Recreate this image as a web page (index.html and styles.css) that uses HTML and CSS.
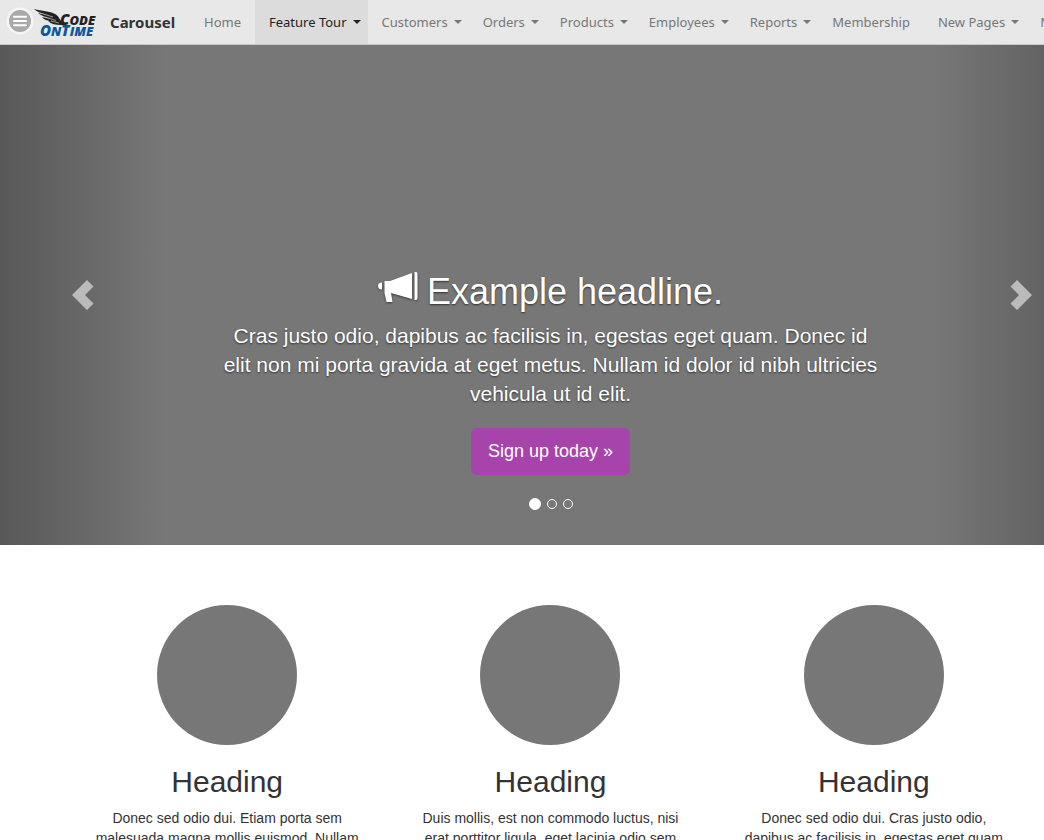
FILE: index.html
```html
<!DOCTYPE html>
<html lang="en">
<head>
<meta charset="utf-8">
<title>Carousel</title>
<link rel="stylesheet" href="styles.css">
</head>
<body>
<header class="navbar">
  <button class="menu-button" type="button" aria-label="Menu">
    <svg width="28" height="28" viewBox="0 0 28 28"><circle cx="14" cy="14" r="13.5" fill="#f5f5f5"/><circle cx="14" cy="14" r="11" fill="#a9a9a9"/><path d="M8 9.800h12M8 14h12M8 18.200h12" stroke="#fff" stroke-width="2" stroke-linecap="round"/></svg>
  </button>
  <a class="logo" href="#" aria-label="Code OnTime">
    <svg width="64" height="32" viewBox="0 0 64 32">
      <path d="M0 3C8 5 16 5 21 8C25 10 25 13 28 16L31 20L27 19C22 19 17 18 14 15L20 16C15 15 10 14 8 11L17 13C11 11 6 9 4 7L14 9C9 8 3 6 0 3Z" fill="#222"/>
      <path d="M6 7L19 11M11 11L22 14.500M17 15L25 17" stroke="#e8e8e8" stroke-width=".6"/>
      <text class="logo-code" x="26" y="19"><tspan class="logo-cap">C</tspan>ODE</text>
      <text class="logo-time" x="6" y="30"><tspan class="logo-cap">O</tspan>N<tspan class="logo-cap">T</tspan>IME</text>
    </svg>
  </a>
  <a class="brand" href="#">Carousel</a>
  <nav class="nav">
    <a class="nav-link" href="#">Home</a>
    <a class="nav-link has-menu active" href="#">Feature Tour<span class="caret"></span></a>
    <a class="nav-link has-menu" href="#">Customers<span class="caret"></span></a>
    <a class="nav-link has-menu" href="#">Orders<span class="caret"></span></a>
    <a class="nav-link has-menu" href="#">Products<span class="caret"></span></a>
    <a class="nav-link has-menu" href="#">Employees<span class="caret"></span></a>
    <a class="nav-link has-menu" href="#">Reports<span class="caret"></span></a>
    <a class="nav-link" href="#">Membership</a>
    <a class="nav-link has-menu" href="#">New Pages<span class="caret"></span></a>
    <a class="nav-link" href="#">More</a>
  </nav>
</header>
<main class="page">
  <section class="carousel">
    <button class="control control-prev" type="button" aria-label="Previous">
      <svg width="22" height="30" viewBox="0 0 22 30"><path d="M15 0L21.500 6.500L13 15L21.500 23.500L15 30L0 15Z" fill="currentColor"/></svg>
    </button>
    <div class="caption">
      <h1 class="headline"><svg class="megaphone" width="41" height="32" viewBox="0 0 41 32"><path d="M36.500 0H38Q39.500 0 39.500 2V26Q39.500 28 38 28H36.500ZM34 1V27L13 21L14.500 30H8.500L6.500 21V9H12ZM4 10.500V17.500Q0 17.500 0 14T4 10.500Z" fill="#fff"/></svg>Example headline.</h1>
      <p class="lead">Cras justo odio, dapibus ac facilisis in, egestas eget quam. Donec id elit non mi porta gravida at eget metus. Nullam id dolor id nibh ultricies vehicula ut id elit.</p>
      <a class="signup" href="#">Sign up today »</a>
      <div class="indicators">
        <button class="dot dot-active" type="button" aria-label="Slide 1"></button>
        <button class="dot" type="button" aria-label="Slide 2"></button>
        <button class="dot" type="button" aria-label="Slide 3"></button>
      </div>
    </div>
    <button class="control control-next" type="button" aria-label="Next">
      <svg width="22" height="30" viewBox="0 0 22 30"><path d="M7 0L.5 6.500L9 15L.5 23.500L7 30L22 15Z" fill="currentColor"/></svg>
    </button>
  </section>
  <section class="features">
    <article class="feature"><div class="circle"></div><h2 class="feature-title">Heading</h2><p class="feature-text">Donec sed odio dui. Etiam porta sem malesuada magna mollis euismod. Nullam</p></article>
    <article class="feature"><div class="circle"></div><h2 class="feature-title">Heading</h2><p class="feature-text">Duis mollis, est non commodo luctus, nisi erat porttitor ligula, eget lacinia odio sem</p></article>
    <article class="feature"><div class="circle"></div><h2 class="feature-title">Heading</h2><p class="feature-text">Donec sed odio dui. Cras justo odio, dapibus ac facilisis in, egestas eget quam</p></article>
  </section>
</main>
</body>
</html>
```
FILE: styles.css
```css
* { box-sizing: border-box; }
html, body { overflow: hidden; }
body { margin: 0; background: #fff; color: #333; font: 14px/20px "Liberation Sans", Arial, sans-serif; }
a { color: inherit; text-decoration: none; }
button { padding: 0; border: 0; background: none; }

.navbar { display: flex; height: 45px; overflow: hidden; background: #e8e8e8; border-bottom: 1px solid #c8c8c8; font-family: "Noto Sans", sans-serif; }
.menu-button { flex: none; width: 28px; height: 28px; margin: 7px 0 0 6px; }
.menu-button svg, .logo svg { display: block; }
.logo { flex: none; padding-top: 6px; }
.logo-code, .logo-time { font: italic 800 13px "Open Sans", sans-serif; }
.logo-code { fill: #222; }
.logo-time { fill: #0a57a0; }
.logo-cap { font-size: 15px; }
.brand { flex: none; width: 92px; padding: 0 12px; font-size: 15px; font-weight: 700; line-height: 44px; }
.nav { display: flex; flex: none; }
.nav-link { display: flex; flex: none; align-items: center; padding: 0 14px; color: #777; font-size: 13px; line-height: 44px; white-space: nowrap; }
.has-menu { padding-right: 7px; }
.active { background: #dcdcdc; color: #222; }
.caret { margin-left: 6px; border: 4px solid transparent; border-top-color: currentColor; border-bottom: 0; }

.page { width: calc(100% + 57px); }
.carousel { display: flex; height: 500px; background: #777; }
.control { display: flex; width: 15%; align-items: center; color: #bbb; }
.control-prev { padding-left: 72px; background: linear-gradient(to right, #585858, #777); }
.control-next { padding-left: 74px; background: linear-gradient(to right, #777, #585858); }
.caption { display: flex; flex: 1; flex-direction: column; align-items: center; justify-content: flex-end; padding: 0 5% 35px; color: #fff; text-align: center; text-shadow: 0 1px 2px rgba(0, 0, 0, .6); }
.headline { margin: 0 0 9px; font-size: 36px; font-weight: 400; line-height: 40px; }
.megaphone { margin-right: 8px; filter: drop-shadow(0 1px 1px rgba(0, 0, 0, .5)); }
.lead { margin: 0 0 20px; font-size: 21px; line-height: 29px; }
.signup { padding: 11px 17px; border-radius: 6px; background: #a644ac; font-size: 18px; line-height: 25px; text-shadow: none; }
.indicators { display: flex; gap: 6px; align-items: center; margin-top: 23px; }
.dot { width: 10px; height: 10px; border: 1px solid #fff; border-radius: 50%; }
.dot-active { width: 12px; height: 12px; background: #fff; }

.features { display: grid; grid-template-columns: repeat(3, 1fr); max-width: 970px; margin: 60px auto 0; }
.feature { padding: 0 25px; text-align: center; }
.circle { width: 140px; height: 140px; margin: 0 auto; border-radius: 50%; background: #777; }
.feature-title { margin: 20px 0 10px; font-size: 30px; font-weight: 400; line-height: 33px; }
.feature-text { margin: 0; }
```
